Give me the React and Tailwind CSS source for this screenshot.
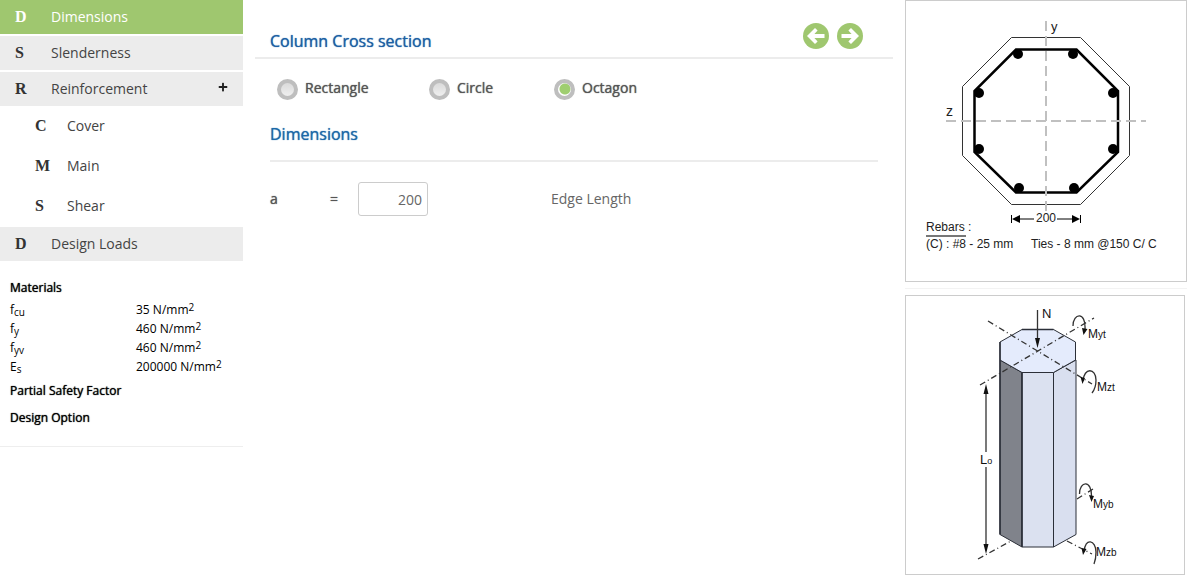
import React, { useState } from 'react'
import clsx from 'clsx'
import { FaPlus } from 'react-icons/fa'

const navItems = [
  { letter: 'D', label: 'Dimensions' },
  { letter: 'S', label: 'Slenderness' },
  {
    letter: 'R',
    label: 'Reinforcement',
    children: [
      { letter: 'C', label: 'Cover' },
      { letter: 'M', label: 'Main' },
      { letter: 'S', label: 'Shear' },
    ],
  },
  { letter: 'D', label: 'Design Loads' },
]

const materials = [
  { symbol: 'f', sub: 'cu', value: 35 },
  { symbol: 'f', sub: 'y', value: 460 },
  { symbol: 'f', sub: 'yv', value: 460 },
  { symbol: 'E', sub: 's', value: 200000 },
]

const shapes = [
  { name: 'Rectangle', width: 'w-[152px]' },
  { name: 'Circle', width: 'w-[125px]' },
  { name: 'Octagon', width: 'w-[120px]' },
]

const rebars = [
  [112, 53], [167, 53], [207, 92], [207, 148],
  [168, 187], [113, 187], [73, 148], [73, 92],
]

// regular letterforms, slightly thickened
const strong = '[text-shadow:0_0_1px_currentColor]'

const Letter = ({ children, className }) => (
  <span className={clsx("font-['Liberation_Serif',serif] text-base font-bold", className)}>{children}</span>
)

const NavItem = ({ item, active }) => (
  <li>
    <a
      href="#"
      className={clsx(
        'flex h-[34px] items-center px-[15px]',
        active ? 'bg-[#9fc76f] text-white' : 'bg-[#ececec] text-[#444]',
        !item.children && 'mb-0.5'
      )}
    >
      <Letter className={clsx('w-9', !active && 'text-[#333]')}>{item.letter}</Letter>
      <span className="flex-1">{item.label}</span>
      {item.children && <FaPlus size={10} className="mb-1 text-[#222]" />}
    </a>
    {item.children && (
      <ul className="pb-px">
        {item.children.map((child) => (
          <li key={child.label}>
            <a href="#" className="flex h-10 items-center pl-[35px] text-[#444]">
              <Letter className="w-8 text-[#333]">{child.letter}</Letter>
              {child.label}
            </a>
          </li>
        ))}
      </ul>
    )}
  </li>
)

const Sidebar = () => (
  <aside className="w-[243px] shrink-0">
    <nav className="text-sm">
      <ul>
        {navItems.map((item, idx) => (
          <NavItem key={item.label} item={item} active={idx === 0} />
        ))}
      </ul>
    </nav>
    <section className="border-b border-[#eee] px-[10px] pt-[15px] pb-[18px] text-[12px] text-black">
      <h3 className={clsx('leading-5', strong)}>Materials</h3>
      <table className="mt-0.5 w-full">
        <tbody>
          {materials.map((m) => (
            <tr key={m.sub} className="h-[19px]">
              <th scope="row" className="w-[126px] p-0 text-left leading-4 font-normal">
                {m.symbol}<sub className="-bottom-0.5 text-[10px]">{m.sub}</sub>
              </th>
              <td className="p-0 leading-4">
                {m.value} N/mm<sup className="-top-[3px] text-[10px]">2</sup>
              </td>
            </tr>
          ))}
        </tbody>
      </table>
      <h3 className={clsx('mt-[5px] leading-5', strong)}>Partial Safety Factor</h3>
      <h3 className={clsx('mt-[7px] leading-5', strong)}>Design Option</h3>
    </section>
  </aside>
)

const ArrowCircle = ({ className }) => (
  <svg width="26" height="26" viewBox="0 0 26 26" className={className}>
    <circle cx="13" cy="13" r="13" fill="#9fc76f" />
    <path d="M4 13L12 5L14.600 7.600L11.400 11H21.500V15H11.400L14.600 18.400L12 21Z" fill="#fff" />
  </svg>
)

const SectionForm = () => {
  const [shape, setShape] = useState('Octagon')
  const [edge, setEdge] = useState('200')

  return (
    <main className="min-w-0 flex-1 px-3 text-sm text-[#555]">
      <header className="flex h-[59px] items-start justify-between border-b-2 border-[#ececec] pl-[15px] pr-[30px]">
        <h2 className={clsx('pt-[29px] text-base leading-6 text-[#1c60a4]', strong)}>Column Cross section</h2>
        <div className="flex gap-2 pt-[23px]">
          <button type="button" aria-label="Previous"><ArrowCircle /></button>
          <button type="button" aria-label="Next"><ArrowCircle className="rotate-180" /></button>
        </div>
      </header>

      <div className="px-[15px]">
        <div className="flex pt-[19px] pl-[7px]">
          {shapes.map(({ name, width }) => (
            <label key={name} className={clsx('flex items-start gap-[7px]', strong, width)}>
              <input
                type="radio"
                name="shape"
                checked={shape === name}
                onChange={() => setShape(name)}
                className="mt-px size-[21px] appearance-none rounded-full border-4 border-[#bebebe] bg-linear-to-b from-[#dadada] to-[#efefef] checked:bg-[radial-gradient(circle_at_7px_6px,#9fce70_5px,#fff_6px)]"
              />
              <span className="leading-5">{name}</span>
            </label>
          ))}
        </div>

        <h2 className={clsx('mt-[22px] border-b-2 border-[#ececec] pb-[14px] text-base leading-6 text-[#1c69a8]', strong)}>
          Dimensions
        </h2>

        <div className="mt-5 flex items-center">
          <label htmlFor="edge" className={clsx('w-[60px]', strong)}>a</label>
          <span className={clsx('w-7', strong)}>=</span>
          <input
            id="edge"
            type="text"
            value={edge}
            onChange={(e) => setEdge(e.target.value)}
            className="h-[34px] w-[70px] rounded-[3px] border border-[#ccc] px-[5px] text-right text-[#666]"
          />
          <span className="ml-[123px] text-[#666]">Edge Length</span>
        </div>
      </div>
    </main>
  )
}

const CrossSection = () => (
  <svg viewBox="0 0 280 280" className="block w-full font-['Liberation_Sans',sans-serif] text-[12px]" fill="none" stroke="#000">
    <path d="M105.5 36.5H174.5L223.5 85.5V154.5L174.5 203.5H105.5L56.5 154.5V85.5Z" stroke="#333" />
    <path d="M110 48.5H170.5L212 90V151L170.5 191.5H110L68.5 151V90Z" strokeWidth="2.5" />
    {rebars.map(([cx, cy]) => (
      <circle key={`${cx}-${cy}`} cx={cx} cy={cy} r="5" fill="#000" stroke="none" />
    ))}
    <path d="M140 20V210M40 120H240" stroke="#c0c0c0" strokeWidth="2" strokeDasharray="10 5" />
    <path d="M105.5 214V222M174.5 214V222M111 218H128M151 218H168" />
    <path d="M106 218L114 214V222ZM174 218L166 214V222Z" fill="#000" stroke="none" />
    <path d="M20 235H60" stroke="#777" strokeWidth="2" />
    <g fill="#222" stroke="none">
      <text x="145" y="30" fontSize="13">y</text>
      <text x="40" y="115" fontSize="14">z</text>
      <text x="130" y="221">200</text>
      <text x="20" y="230">Rebars :</text>
      <text x="20" y="247">(C) : #8 - 25 mm</text>
      <text x="125" y="247">Ties - 8 mm @150 C/ C</text>
    </g>
  </svg>
)

const Moment = ({ x, y, axis }) => (
  <text x={x} y={y}>M<tspan fontSize="10">{axis}</tspan></text>
)

const ColumnModel = () => (
  <svg viewBox="0 0 278 278" className="block w-full font-['Liberation_Sans',sans-serif] text-[12px]" fill="none" stroke="#333">
    <g stroke="#2b2f38" strokeLinejoin="round">
      <path d="M94 64L116 76.5V251L94 238.5Z" fill="#80838b" />
      <path d="M116 76.5H147.5V251H116Z" fill="#dbe1f0" />
      <path d="M147.5 76.5L170 64V238.5L147.5 251Z" fill="#d9dfef" />
      <path d="M116 33.5H147.5L169.5 46V64L147.5 76.5H116L94 64V46Z" fill="#e4ebfc" />
      <path d="M94 238.5V46M116 76.5V251M116 33.5H147.5" strokeWidth="1.5" />
    </g>
    <path
      d="M82 25L186 88M74 89L188 22M72 263L105 245M161 245L186 258M171 203L187 193"
      strokeDasharray="6 3 1 3"
      strokeWidth="1.3"
    />
    <path d="M131.5 14V45M80 95V156M80 171V252" strokeWidth="1.3" />
    <path
      d="M167 30C167 17 180 15 179 33M177 85C178 71 190 72 190 84Q190 92 186 97M173.5 198C173.5 185 186 183 185.5 201M178 256C179 241 190 244 190 256Q190 263 188 268"
      strokeWidth="1.3"
    />
    <g fill="#111" stroke="none">
      <path d="M129 42H134L131.5 52ZM77.5 98H82.5L80 88ZM77.5 248H82.5L80 258Z" />
      <path d="M176 32L181.5 33L177.5 39ZM174.5 81L179 82L176.5 88Z" />
      <path d="M183 199L188 200L185.5 206ZM175.5 252L180.5 253L177 259Z" />
    </g>
    <g fill="#111" stroke="none">
      <text x="136" y="22" fontSize="13">N</text>
      <text x="74" y="168" fontSize="13">L<tspan fontSize="9">o</tspan></text>
      <Moment x={182} y={42} axis="yt" />
      <Moment x={191} y={95} axis="zt" />
      <Moment x={187} y={212} axis="yb" />
      <Moment x={190} y={260} axis="zb" />
    </g>
  </svg>
)

const App = () => (
  <div className="flex bg-white font-['Open_Sans',sans-serif]">
    <Sidebar />
    <SectionForm />
    <aside className="mr-[3px] w-[282px] shrink-0">
      <div className="border border-[#ccc]"><CrossSection /></div>
      <div className="mt-1.5 border-t border-[#f3f3f3] pt-1.5 pr-0.5">
        <div className="border border-[#ccc]"><ColumnModel /></div>
      </div>
    </aside>
  </div>
)

export default App
